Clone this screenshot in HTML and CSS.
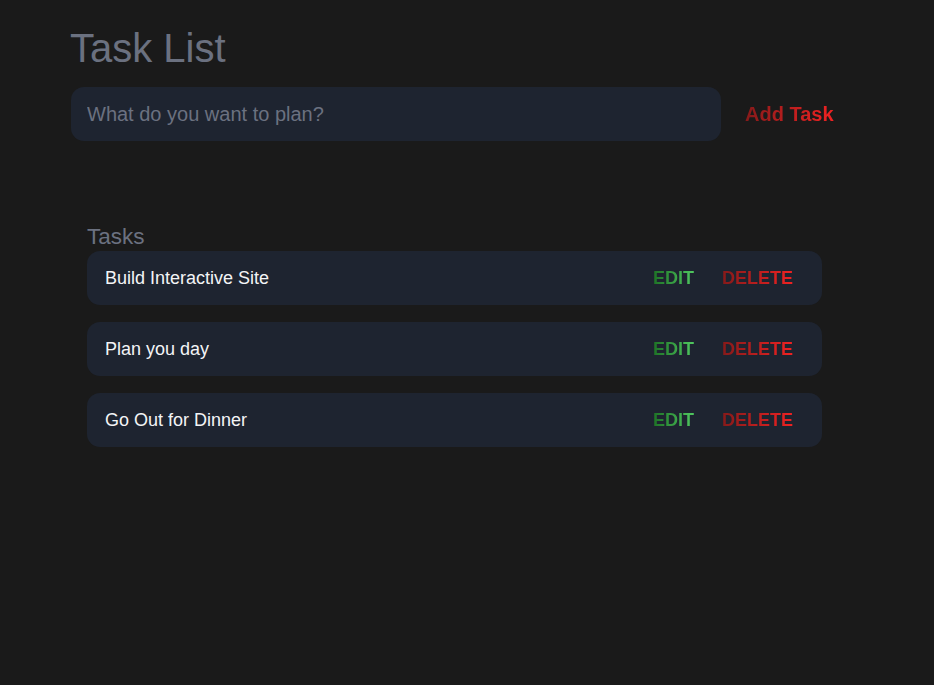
FILE: index.html
```html
<!DOCTYPE html>
<html>
<head>
<meta charset="utf-8">
<title>Task List</title>
<link rel="stylesheet" href="styles.css">
</head>
<body>
<div class="app">
  <h1 class="title">Task List</h1>
  <form class="new-task">
    <input class="new-task-input" type="text" placeholder="What do you want to plan?">
    <button class="add-btn" type="button"><span class="grad-red">Add Task</span></button>
  </form>
  <section class="tasks">
    <h2 class="tasks-title">Tasks</h2>
    <div class="task-list">
      <div class="task">
        <span class="task-text">Build Interactive Site</span>
        <div class="actions">
          <button class="btn edit" type="button"><span class="grad-green">EDIT</span></button>
          <button class="btn delete" type="button"><span class="grad-red">DELETE</span></button>
        </div>
      </div>
      <div class="task">
        <span class="task-text">Plan you day</span>
        <div class="actions">
          <button class="btn edit" type="button"><span class="grad-green">EDIT</span></button>
          <button class="btn delete" type="button"><span class="grad-red">DELETE</span></button>
        </div>
      </div>
      <div class="task">
        <span class="task-text">Go Out for Dinner</span>
        <div class="actions">
          <button class="btn edit" type="button"><span class="grad-green">EDIT</span></button>
          <button class="btn delete" type="button"><span class="grad-red">DELETE</span></button>
        </div>
      </div>
    </div>
  </section>
</div>
</body>
</html>
```

FILE: styles.css
```css
* { box-sizing: border-box; }
html, body {
  margin: 0;
  padding: 0;
  background: #1a1a1a;
  font-family: "Liberation Sans", Arial, sans-serif;
}
.app {
  padding: 22px 0 0 71px;
}
.title {
  margin: 0 0 0 -1px;
  font-size: 40px;
  font-weight: 400;
  line-height: 52px;
  color: #6b7180;
}
.new-task {
  display: flex;
  align-items: center;
  margin: 13px 0 0 0;
}
.new-task-input {
  width: 650px;
  height: 54px;
  border: none;
  outline: none;
  border-radius: 13px;
  background: #1e2430;
  padding: 0 16px;
  font-family: "Liberation Sans", Arial, sans-serif;
  font-size: 20px;
  color: #e5e7eb;
}
.new-task-input::placeholder {
  color: #6b7180;
}
.add-btn {
  margin-left: 24px;
  border: none;
  background: none;
  padding: 0;
  font-family: "Liberation Sans", Arial, sans-serif;
  font-weight: 700;
  font-size: 20px;
  cursor: pointer;
}
.grad-red {
  background: linear-gradient(90deg, #861a1a, #f02222);
  -webkit-background-clip: text;
  background-clip: text;
  color: transparent;
}
.grad-green {
  background: linear-gradient(90deg, #1e7326, #50c860);
  -webkit-background-clip: text;
  background-clip: text;
  color: transparent;
}
.tasks {
  margin: 82px 0 0 16px;
  width: 735px;
}
.tasks-title {
  margin: 0;
  font-size: 22.5px;
  font-weight: 400;
  line-height: 27px;
  color: #6b7180;
}
.task-list {
  display: flex;
  flex-direction: column;
  gap: 17px;
  margin-top: 1px;
}
.task {
  display: flex;
  align-items: center;
  justify-content: space-between;
  height: 54px;
  border-radius: 13px;
  background: #1e2430;
  padding: 0 29px 0 18px;
}
.task-text {
  font-size: 18px;
  color: #f3f4f6;
}
.actions {
  display: flex;
  gap: 28px;
}
.btn {
  border: none;
  background: none;
  padding: 0;
  font-family: "Liberation Sans", Arial, sans-serif;
  font-weight: 700;
  font-size: 18px;
  cursor: pointer;
}
```
